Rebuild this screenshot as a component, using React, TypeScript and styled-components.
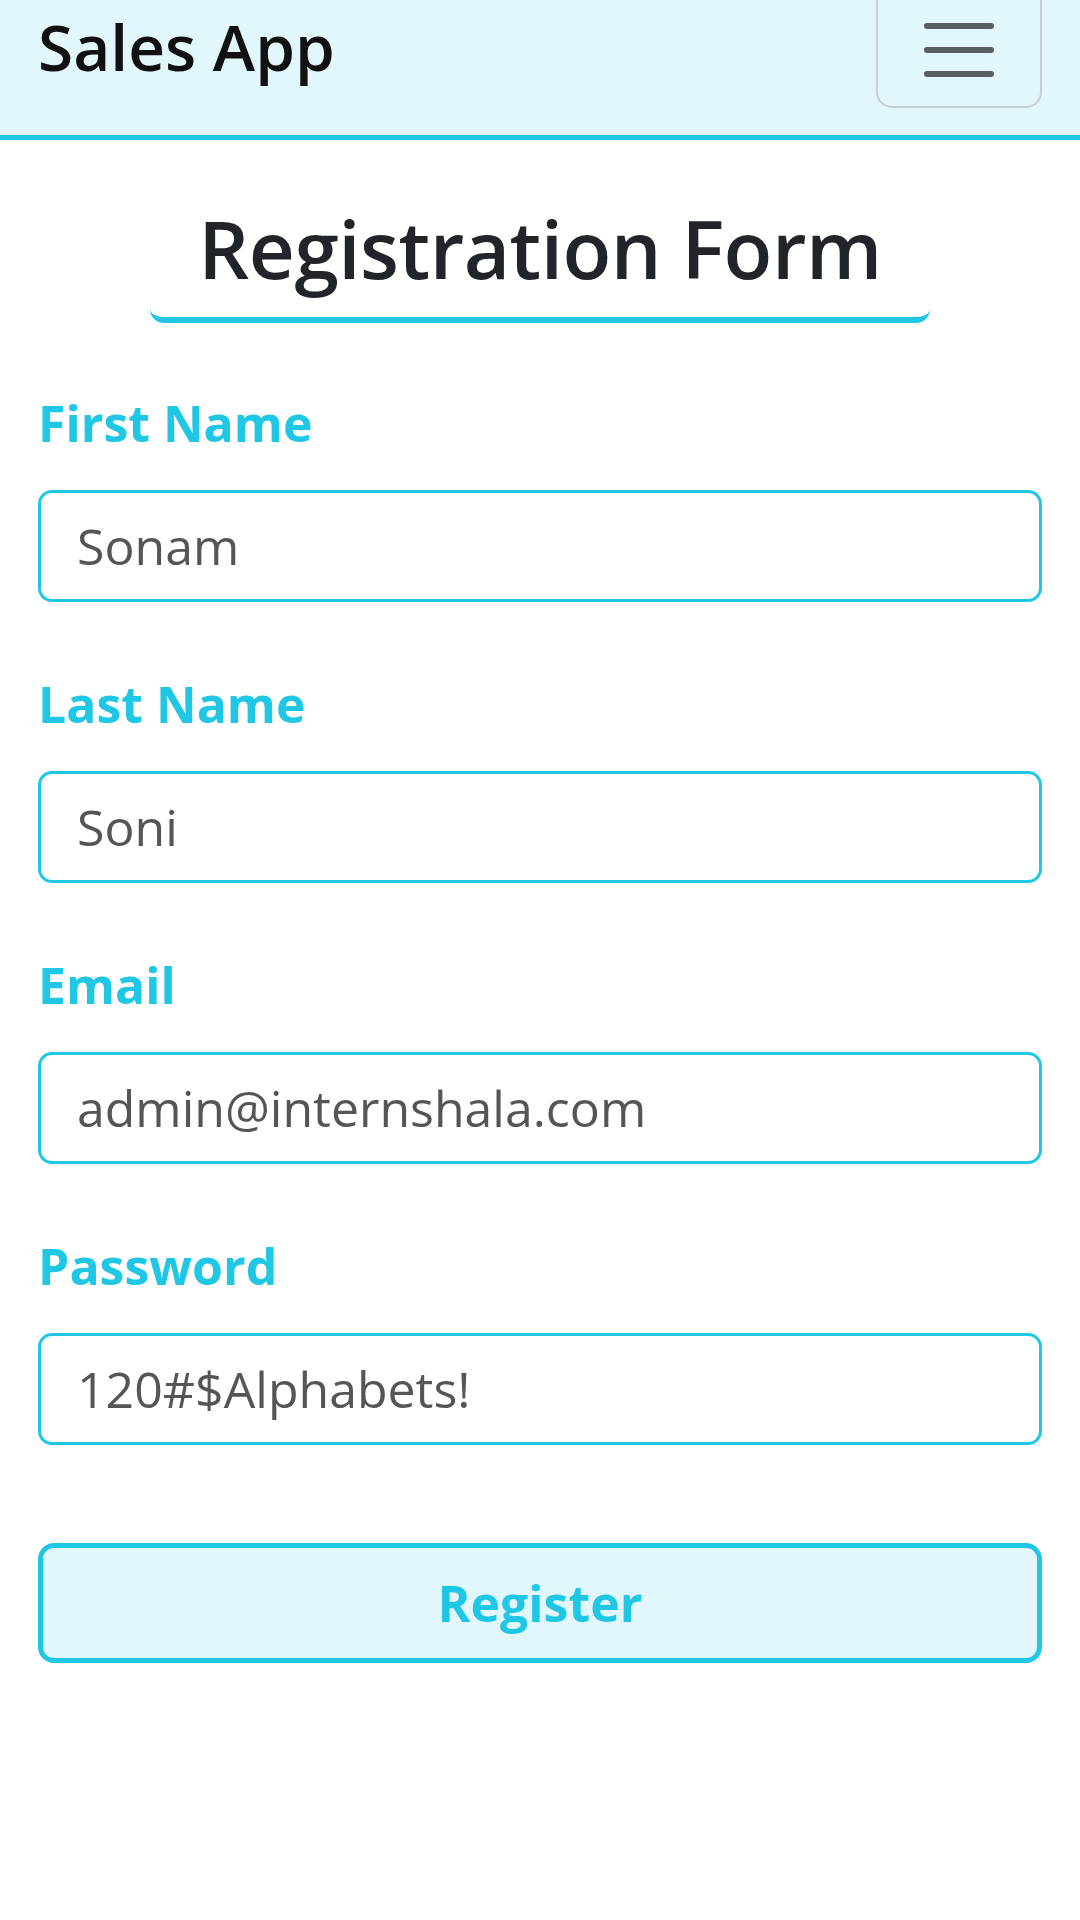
import React from "react";
import styled, { createGlobalStyle } from "styled-components";

const CYAN = "#1fc7e4";
const FONT = `"Open Sans", "Liberation Sans", sans-serif`;

const Global = createGlobalStyle`
  html, body { margin: 0; padding: 0; background: #ffffff; }
  body { font-family: ${FONT}; }
  * { box-sizing: border-box; }
`;

const Page = styled.div`
  width: 1080px;
  min-height: 1920px;
  background: #ffffff;
  overflow: hidden;
`;

const Navbar = styled.header`
  height: 140px;
  background: #e2f7fc;
  border-bottom: 5px solid ${CYAN};
  display: flex;
  justify-content: space-between;
  align-items: flex-start;
  padding: 0 38px 0 38px;
`;

const Brand = styled.div`
  font-family: ${FONT};
  font-size: 64px;
  font-weight: 600;
  color: #111111;
  line-height: 1.2;
  margin-top: 9px;
`;

const Toggler = styled.button`
  width: 166px;
  height: 126px;
  margin-top: -18px;
  border: 2px solid #c5d0d4;
  border-radius: 16px;
  background: transparent;
  display: flex;
  align-items: center;
  justify-content: center;
  padding: 10px 0 0 0;
`;

const Main = styled.main`
  padding: 0 38px;
  display: flex;
  flex-direction: column;
`;

const TitleWrap = styled.div`
  display: flex;
  justify-content: center;
  margin-top: 60px;
`;

const Title = styled.h2`
  margin: 0;
  font-family: ${FONT};
  font-size: 80px;
  font-weight: 600;
  line-height: 1.2;
  color: #212529;
  padding: 0 48px 21px;
  border-bottom: 6px solid ${CYAN};
  border-radius: 14px;
  letter-spacing: -0.5px;
`;

const Form = styled.form`
  display: flex;
  flex-direction: column;
  gap: 72px;
  margin-top: 70px;
`;

const Field = styled.div`
  display: flex;
  flex-direction: column;
  gap: 37px;
`;

const Label = styled.label`
  font-family: ${FONT};
  font-size: 50px;
  font-weight: 700;
  line-height: 1.2;
  color: ${CYAN};
`;

const Input = styled.input`
  width: 100%;
  height: 112px;
  border: 3px solid ${CYAN};
  border-radius: 14px;
  padding: 0 36px;
  font-family: ${FONT};
  font-size: 50px;
  color: #555555;
  background: #ffffff;
  outline: none;
`;

const Button = styled.button`
  margin-top: 26px;
  width: 100%;
  height: 120px;
  border: 5px solid ${CYAN};
  border-radius: 16px;
  background: #e2f7fc;
  color: ${CYAN};
  font-family: ${FONT};
  font-size: 50px;
  font-weight: 700;
`;

const fields = [
  { id: "first", label: "First Name", value: "Sonam", type: "text" },
  { id: "last", label: "Last Name", value: "Soni", type: "text" },
  { id: "email", label: "Email", value: "admin@internshala.com", type: "text" },
  { id: "pass", label: "Password", value: "120#$Alphabets!", type: "text" },
];

export default function App() {
  return (
    <Page>
      <Global />
      <Navbar>
        <Brand>Sales App</Brand>
        <Toggler aria-label="menu">
          <svg width="70" height="54" viewBox="0 0 70 54">
            <g stroke="#575e63" strokeWidth="6" strokeLinecap="round">
              <line x1="3" y1="3" x2="67" y2="3" />
              <line x1="3" y1="27" x2="67" y2="27" />
              <line x1="3" y1="51" x2="67" y2="51" />
            </g>
          </svg>
        </Toggler>
      </Navbar>
      <Main>
        <TitleWrap>
          <Title>Registration Form</Title>
        </TitleWrap>
        <Form onSubmit={(e) => e.preventDefault()}>
          {fields.map((f) => (
            <Field key={f.id}>
              <Label htmlFor={f.id}>{f.label}</Label>
              <Input id={f.id} type={f.type} defaultValue={f.value} />
            </Field>
          ))}
          <Button type="submit">Register</Button>
        </Form>
      </Main>
    </Page>
  );
}
